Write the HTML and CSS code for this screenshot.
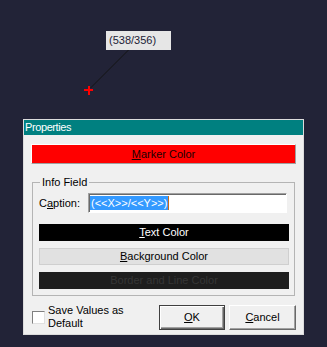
FILE: index.html
```html
<!DOCTYPE html>
<html lang="en">
<head>
    <meta charset="UTF-8">
    <title>Properties</title>
    <link rel="stylesheet" href="styles.css">
</head>
<body>

    <div class="desktop">
        <!-- Marker and its info tag on the canvas -->
        <svg class="overlay" width="327" height="347" viewBox="0 0 327 347">
            <line x1="128.5" y1="50" x2="90.5" y2="88" stroke="#141414" stroke-width="1"/>
            <rect x="84" y="89" width="9" height="2" fill="#ff0000"/>
            <rect x="88" y="86" width="2" height="9" fill="#ff0000"/>
        </svg>
        <div class="coords">(538/356)</div>

        <!-- Properties dialog -->
        <div class="dialog">
            <div class="titlebar">Properties</div>
            <div class="dialog-body">
                <button class="color-btn marker"><u>M</u>arker Color</button>

                <fieldset class="group">
                    <legend>Info Field</legend>
                    <div class="caption-row">
                        <label class="caption-label">C<u>a</u>ption:</label>
                        <div class="textbox"><span class="selected">(&lt;&lt;X&gt;&gt;/&lt;&lt;Y&gt;&gt;)</span><span class="caret"></span></div>
                    </div>
                    <button class="color-btn text-color"><u>T</u>ext Color</button>
                    <button class="color-btn back-color"><u>B</u>ackground Color</button>
                    <button class="color-btn line-color">Border and Line Color</button>
                </fieldset>

                <div class="footer">
                    <span class="checkbox"></span>
                    <span class="check-label">Save Values as Default</span>
                    <button class="push-btn default"><u>O</u>K</button>
                    <button class="push-btn"><u>C</u>ancel</button>
                </div>
            </div>
        </div>
    </div>

</body>
</html>
```

FILE: styles.css
```css
body {
    margin: 0;
    background-color: #222337;
    font-family: "Liberation Sans", Arial, sans-serif;
    font-size: 11px;
    color: #000;
}

.desktop {
    position: relative;
    width: 327px;
    height: 347px;
    overflow: hidden;
}

.overlay {
    position: absolute;
    left: 0;
    top: 0;
}

/* Coordinate tag */
.coords {
    position: absolute;
    left: 106px;
    top: 31px;
    width: 62px;
    height: 19px;
    line-height: 19px;
    padding-left: 3px;
    background-color: #e6e6e6;
    color: #1c1c36;
}

/* Dialog window */
.dialog {
    position: absolute;
    left: 23px;
    top: 119px;
    width: 279px;
    height: 214px;
    border: 1px solid #dcdcdc;
    background-color: #f0f0f0;
    display: flex;
    flex-direction: column;
}

.titlebar {
    height: 15px;
    line-height: 15px;
    padding-left: 1px;
    background-color: #008080;
    color: #fff;
    letter-spacing: -0.4px;
}

.dialog-body {
    flex: 1;
    display: flex;
    flex-direction: column;
    padding: 9px 7px 0 7px;
}

button {
    font: inherit;
    margin: 0;
    padding: 0;
    cursor: pointer;
}

/* Colour buttons */
.color-btn {
    display: block;
    width: 100%;
    height: 17px;
    line-height: 15px;
    border: 1px solid transparent;
    text-align: center;
}

.marker {
    height: 20px;
    line-height: 18px;
    background-color: #ff0000;
    border-color: #fff #a0a0a0 #a0a0a0 #fff;
    color: #1a0000;
}

.text-color {
    margin-top: 10px;
    background-color: #000;
    border-color: #000;
    color: #fff;
}

.back-color {
    margin-top: 7px;
    background-color: #e1e1e1;
    border-color: #cfcfcf;
    color: #000;
}

.line-color {
    margin-top: 7px;
    background-color: #1e1e1e;
    border-color: #1e1e1e;
    color: #363636;
}

/* Info Field group */
.group {
    margin: 12px 1px 0 1px;
    padding: 3px 5px 6px 6px;
    border: 1px solid #b4b4b4;
    min-width: 0;
}

.group legend {
    padding: 0 2px;
    margin-left: 1px;
    line-height: 13px;
}

.caption-row {
    display: flex;
    align-items: center;
    height: 22px;
}

.caption-label {
    flex: 0 0 49px;
}

.textbox {
    width: 196px;
    height: 18px;
    display: flex;
    align-items: center;
    padding-left: 1px;
    background-color: #fff;
    border: 1px solid;
    border-color: #a0a0a0 #fff #fff #a0a0a0;
    box-shadow: inset 1px 1px 0 #696969;
}

.selected {
    line-height: 14px;
    padding: 0 1px;
    background-color: #3399ff;
    color: #fff;
}

.caret {
    width: 1px;
    height: 14px;
    background-color: #c46a1c;
}

/* Bottom row */
.footer {
    display: flex;
    align-items: center;
    margin-top: 8px;
}

.checkbox {
    width: 11px;
    height: 11px;
    margin-left: 1px;
    background-color: #fff;
    border: 1px solid;
    border-color: #808080 #e0e0e0 #e0e0e0 #808080;
}

.check-label {
    width: 90px;
    margin-left: 3px;
    line-height: 13px;
}

.push-btn {
    width: 67px;
    height: 25px;
    margin-left: 4px;
    background-color: #f0f0f0;
    border: 1px solid;
    border-color: #fff #696969 #696969 #fff;
    box-shadow: inset -1px -1px 0 #a0a0a0;
    color: #000;
}

.push-btn.default {
    width: 66px;
    margin-left: auto;
    border-color: #404040;
    box-shadow: inset 1px 1px 0 #fff, inset -1px -1px 0 #696969, inset -2px -2px 0 #a0a0a0;
}
```
